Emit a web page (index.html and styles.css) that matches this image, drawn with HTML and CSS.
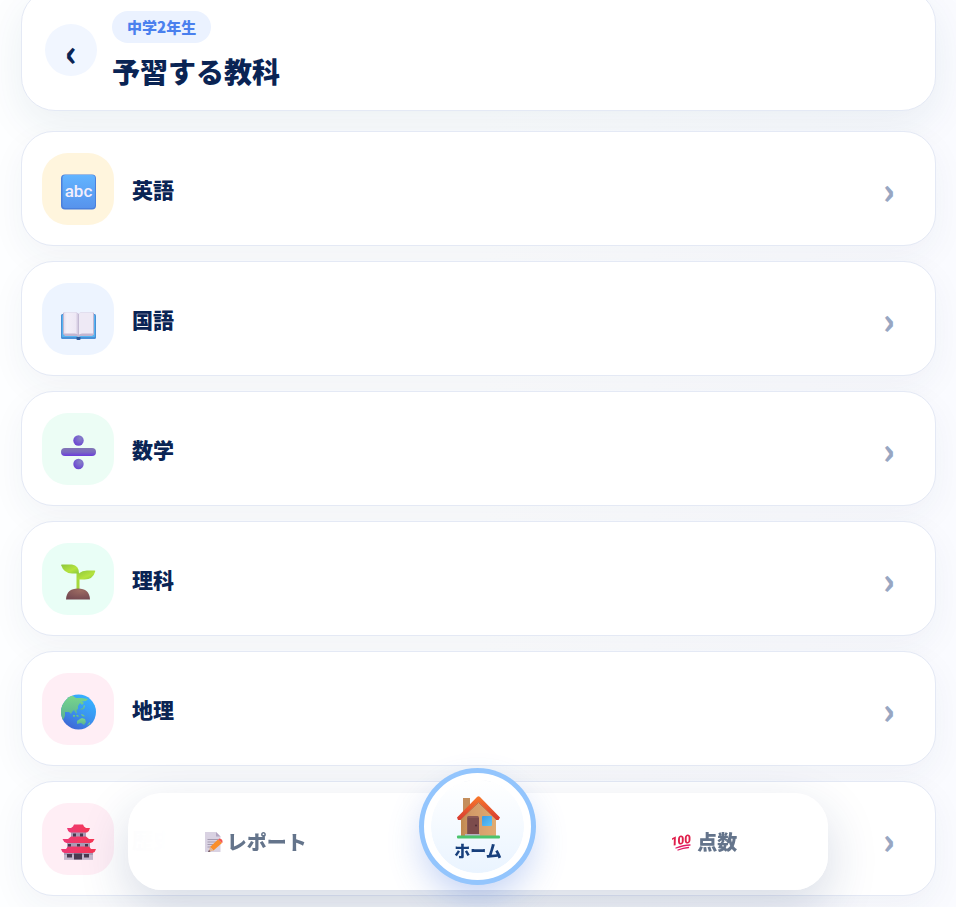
FILE: index.html
```html
<!DOCTYPE html>
<html lang="ja">
<head>
    <meta charset="UTF-8">
    <meta name="viewport" content="width=device-width, initial-scale=1.0">
    <link rel="stylesheet" href="styles.css">
    <title>予習する教科</title>
</head>
<body>
    <main class="page">
        <header class="page-header">
            <button type="button" class="back-button" aria-label="戻る">‹</button>
            <div class="header-text">
                <span class="grade-pill">中学2年生</span>
                <h1 class="page-title">予習する教科</h1>
            </div>
        </header>

        <nav class="subject-list" aria-label="教科">
            <a href="#english" class="subject-card">
                <span class="subject-icon english">
                    <svg viewBox="0 0 36 36" width="36" height="36" aria-hidden="true">
                        <defs>
                            <linearGradient id="abcBg" x1="0" y1="0" x2="0" y2="1">
                                <stop offset="0" stop-color="#62b4ff"/>
                                <stop offset="1" stop-color="#5793ec"/>
                            </linearGradient>
                        </defs>
                        <rect x="1" y="0.5" width="35" height="35" rx="4" fill="#4a80dc"/>
                        <rect x="2.500" y="1" width="32.500" height="33" rx="3" fill="url(#abcBg)"/>
                        <text x="18.5" y="23" text-anchor="middle" class="abc-text">abc</text>
                    </svg>
                </span>
                <span class="subject-name">英語</span>
                <span class="chevron" aria-hidden="true">›</span>
            </a>

            <a href="#japanese" class="subject-card">
                <span class="subject-icon japanese">
                    <svg viewBox="0 0 36 36" width="36" height="36" aria-hidden="true">
                        <defs>
                            <linearGradient id="pageL" x1="0" y1="0" x2="1" y2="0">
                                <stop offset="0" stop-color="#e6e0ee"/>
                                <stop offset="0.2" stop-color="#f3eff8"/>
                                <stop offset="0.8" stop-color="#eee8f5"/>
                                <stop offset="1" stop-color="#c9bfd9"/>
                            </linearGradient>
                        </defs>
                        <rect x="1" y="10" width="35" height="25" rx="1.5" fill="#4a90d6"/>
                        <rect x="2" y="11" width="33" height="22" rx="1" fill="#56b4f0"/>
                        <path d="M16.5 33h4v2.5q-2 1.5-4 0z" fill="#2d5c9e"/>
                        <path d="M3 30V9.500Q3 8.500 4 8.500H16Q18 8.500 18.500 10Q19 8.500 21 8.500H33Q34 8.500 34 9.500V30.500L32 32H20.500L18.500 33L16.500 32H5z" fill="#c2b6d1"/>
                        <path d="M4 30V9.500Q4 8.500 5 8.500H15.500Q18 8.500 18.500 10V31Q17 29.500 15 29.500H4z" fill="url(#pageL)"/>
                        <path d="M33 29.500V9.500Q33 8.500 32 8.500H21.500Q19 8.500 18.500 10V31Q20 29.500 22 29.500z" fill="#eee9f5"/>
                        <path d="M18.500 10V31" stroke="#c4bad3"/>
                    </svg>
                </span>
                <span class="subject-name">国語</span>
                <span class="chevron" aria-hidden="true">›</span>
            </a>

            <a href="#math" class="subject-card">
                <span class="subject-icon math">
                    <svg viewBox="0 0 36 36" width="36" height="36" aria-hidden="true">
                        <defs>
                            <radialGradient id="divDot" cx="0.65" cy="0.3" r="0.8">
                                <stop offset="0" stop-color="#8783c4"/>
                                <stop offset="0.5" stop-color="#7862cf"/>
                                <stop offset="1" stop-color="#673fd0"/>
                            </radialGradient>
                            <linearGradient id="divBar" x1="0" y1="0" x2="0" y2="1">
                                <stop offset="0" stop-color="#8276b5"/>
                                <stop offset="0.5" stop-color="#7a6bbf"/>
                                <stop offset="1" stop-color="#6b3bdd"/>
                            </linearGradient>
                        </defs>
                        <circle cx="18.500" cy="6.500" r="5.200" fill="url(#divDot)"/>
                        <rect x="1" y="14" width="35" height="8" rx="4" fill="url(#divBar)"/>
                        <circle cx="18.500" cy="30" r="5.200" fill="url(#divDot)"/>
                    </svg>
                </span>
                <span class="subject-name">数学</span>
                <span class="chevron" aria-hidden="true">›</span>
            </a>

            <a href="#science" class="subject-card">
                <span class="subject-icon science">
                    <svg viewBox="0 0 36 36" width="36" height="36" aria-hidden="true">
                        <defs>
                            <linearGradient id="leaf" x1="0" y1="0" x2="1" y2="1">
                                <stop offset="0" stop-color="#8cc63c"/>
                                <stop offset="0.6" stop-color="#b5e33e"/>
                                <stop offset="1" stop-color="#87c93e"/>
                            </linearGradient>
                            <radialGradient id="soil" cx="0.6" cy="0.2" r="0.9">
                                <stop offset="0" stop-color="#9c6b62"/>
                                <stop offset="1" stop-color="#724750"/>
                            </radialGradient>
                        </defs>
                        <path d="M16.500 26V9H19V15H19.500V26z" fill="#a5d83c"/>
                        <path d="M1 1Q1 0.500 2 0.500H12Q19 1.500 19 9.500H12Q4 9.500 1 1z" fill="url(#leaf)"/>
                        <path d="M17 15.500Q17 7 27 6.500L34.500 6.500Q35.500 6.500 35.200 7.500Q33 15.500 24.500 15.500z" fill="url(#leaf)"/>
                        <path d="M6 35.500Q6.500 24.500 18 24.500T30 35.500z" fill="url(#soil)"/>
                    </svg>
                </span>
                <span class="subject-name">理科</span>
                <span class="chevron" aria-hidden="true">›</span>
            </a>

            <a href="#geography" class="subject-card">
                <span class="subject-icon geography">
                    <svg viewBox="0 0 36 36" width="36" height="36" aria-hidden="true">
                        <defs>
                            <linearGradient id="sea" x1="0.8" y1="0.1" x2="0.3" y2="1">
                                <stop offset="0" stop-color="#36b0ff"/>
                                <stop offset="0.5" stop-color="#3b93ef"/>
                                <stop offset="1" stop-color="#3f66d4"/>
                            </linearGradient>
                            <linearGradient id="land" x1="0" y1="0" x2="0" y2="1">
                                <stop offset="0" stop-color="#79d68b"/>
                                <stop offset="1" stop-color="#58b093"/>
                            </linearGradient>
                            <clipPath id="globe"><circle cx="18.500" cy="18" r="17.500"/></clipPath>
                        </defs>
                        <circle cx="18.500" cy="18" r="17.500" fill="url(#sea)"/>
                        <g clip-path="url(#globe)" fill="url(#land)">
                            <path d="M0 26V8L8 1.500L13 2L16 4L22 4L28 5L26 7L22 7.500L24 9L22 11L20 9L18 12L18 15L16.500 16L17 20L15 18L14 16L12 18L11 20L9 18L5 18L5 22L3 26z"/>
                            <path d="M20 15l3-1 1-3 1 1-1 3-3 1z"/>
                            <path d="M13 21h2v2h-2zM16 21h2l1 2h-2zM21 20l3 1 1 2-3-1z"/>
                            <path d="M17 27L20 25L22 24L25 25L26 28L24 31L21 29L17 30z"/>
                            <path d="M28 30l2-2v2l-3 2z"/>
                        </g>
                    </svg>
                </span>
                <span class="subject-name">地理</span>
                <span class="chevron" aria-hidden="true">›</span>
            </a>

            <a href="#history" class="subject-card">
                <span class="subject-icon history">
                    <svg viewBox="0 0 36 36" width="36" height="36" aria-hidden="true">
                        <defs>
                            <linearGradient id="roof" x1="0" y1="0" x2="1" y2="0">
                                <stop offset="0" stop-color="#ed3976"/>
                                <stop offset="1" stop-color="#f53854"/>
                            </linearGradient>
                        </defs>
                        <path d="M11 8h15v5H11zM7 18h23v6H7zM4 27h29v8.500H4z" fill="#aa9ab5"/>
                        <path d="M4 31h29v4.500H4z" fill="#c3b6cb"/>
                        <path d="M14 0.500H23L24 2.500L26 4L30 4Q29.500 7 27 8.500H10Q7.500 7 7 4L11 4L13 2.500z" fill="url(#roof)"/>
                        <path d="M11 12.500H26L29 15L34.500 15Q33.500 18 30.500 19H6.500Q3.500 18 2.500 15L8 15z" fill="url(#roof)"/>
                        <path d="M8 22.500H29L31 25L36 25Q35.500 28 32.500 29H4.500Q1.500 28 1 25L6 25z" fill="url(#roof)"/>
                        <path d="M13 9.500h3v3h-3zM20 9.500h3v3h-3zM8 20h3v2.500H8zM17 20h3v2.500h-3zM25 20h3v2.500h-3zM7 30h5v3.500H7zM24 30h5v3.500h-5zM14 29.500h8v6h-8z" fill="#493a50"/>
                    </svg>
                </span>
                <span class="subject-name">歴史</span>
                <span class="chevron" aria-hidden="true">›</span>
            </a>
        </nav>
    </main>

    <!-- Bottom tab bar -->
    <nav class="tab-bar" aria-label="メニュー">
        <a href="#report" class="tab">
            <svg viewBox="-5 0 24 22" width="24" height="22" aria-hidden="true">
                <path d="M1 1H12L16.500 5.500V21H1z" fill="#d9d2e2"/>
                <path d="M12 1L16.500 5.500H12z" fill="#b3a6c2"/>
                <path d="M3.500 8.500H14M3.500 11H13M3.500 13.500H10M3.500 16H7" stroke="#a59bb0" stroke-width="1"/>
                <path d="M6 16L14 8.500L18 12L9.500 19.500z" fill="#f98e2b"/>
                <path d="M14 8.500L15.500 7.500Q19 8 18.500 11.500L18 12z" fill="#f45750"/>
                <path d="M6 16L9.500 19.500L4.500 21z" fill="#e3b592"/>
                <path d="M5 19L6.500 20.500L4 21z" fill="#5a4256"/>
            </svg>
            <span>レポート</span>
        </a>

        <a href="#home" class="tab-home" aria-current="page">
            <svg viewBox="0 0 44 44" width="44" height="44" aria-hidden="true">
                <defs>
                    <linearGradient id="wall" x1="0" y1="0" x2="1" y2="0">
                        <stop offset="0" stop-color="#bf884f"/>
                        <stop offset="0.3" stop-color="#d39a68"/>
                        <stop offset="1" stop-color="#e0ac72"/>
                    </linearGradient>
                    <linearGradient id="top" x1="0" y1="0" x2="0" y2="1">
                        <stop offset="0" stop-color="#f8792b"/>
                        <stop offset="1" stop-color="#d83a31"/>
                    </linearGradient>
                    <linearGradient id="pane" x1="0" y1="0" x2="1" y2="1">
                        <stop offset="0" stop-color="#3c9be8"/>
                        <stop offset="1" stop-color="#5dc5f7"/>
                    </linearGradient>
                </defs>
                <rect x="7" y="3" width="7" height="18" fill="#c48e5c"/>
                <path d="M5 21L22.500 4L40 21V41H5z" fill="url(#wall)"/>
                <path d="M4 25L22.500 7.500L41 25" fill="none" stroke="#b5714a" stroke-width="1"/>
                <path d="M1 22.500L21 2Q22.500 0.500 24 2L44 22.500L42.500 25L40.500 25L22.500 7L4 25L2 25z" fill="url(#top)"/>
                <rect x="11" y="21" width="12" height="19" rx="1.500" fill="#8b5854"/>
                <rect x="12" y="23" width="11" height="17" fill="#7c4c4c"/>
                <circle cx="20" cy="30.500" r="1" fill="#4f2c34"/>
                <rect x="26" y="21" width="10" height="10" rx="1" fill="url(#pane)"/>
                <path d="M9 39H24V41H9z" fill="#b8b0c1"/>
                <rect x="1" y="40.500" width="43" height="3" rx="1" fill="#4bc46c"/>
            </svg>
            <span>ホーム</span>
        </a>

        <a href="#score" class="tab">
            <svg viewBox="-4 0 24 22" width="24" height="22" class="hundred" aria-hidden="true">
                <text x="-2" y="13" transform="rotate(-8 10 11)" class="hundred-text">100</text>
                <path d="M3 17Q11 14 17 14M5 19Q10 17 15.500 16.500" fill="none" stroke="#e01965" stroke-width="1.300" stroke-linecap="round"/>
            </svg>
            <span>点数</span>
        </a>
    </nav>
</body>
</html>
```
FILE: styles.css
```css
* {
    box-sizing: border-box;
}

body {
    margin: 0;
    min-height: 100vh;
    font-family: "Noto Sans CJK JP", sans-serif;
    font-weight: 900;
    color: #0a2454;
    background: linear-gradient(90deg, #fdfeff 0%, #fdfeff 50%, #fafbff 100%);
}

a {
    color: inherit;
    text-decoration: none;
}

/* display: flow-root keeps the pulled-up header inside the page */
.page {
    display: flow-root;
    padding: 0 20px 0 21px;
}

.page-header {
    display: flex;
    align-items: center;
    gap: 15px;
    height: 122px;
    margin-top: -11px;
    margin-bottom: 20px;
    padding: 0 23px;
    border: 1px solid #e4e9f5;
    border-radius: 34px;
    background: #fff;
    box-shadow: 0 14px 40px rgba(30, 76, 100, 0.08);
}

.back-button {
    width: 52px;
    height: 52px;
    padding: 0;
    border: 0;
    border-radius: 50%;
    background: #f1f6ff;
    color: #0a2454;
    font: inherit;
    font-size: 36px;
    line-height: 52px;
}

.header-text {
    display: flex;
    flex-direction: column;
    align-items: flex-start;
    gap: 10px;
}

.grade-pill {
    padding: 0 15px;
    border-radius: 16px;
    background: #ebf2ff;
    color: #4a80ee;
    font-size: 15px;
    line-height: 32px;
}

.page-title {
    margin: 0;
    font-size: 28px;
    font-weight: 900;
    line-height: 36px;
}

/* Subject cards */
.subject-list {
    display: flex;
    flex-direction: column;
    gap: 15px;
}

.subject-card {
    display: flex;
    align-items: center;
    gap: 18px;
    padding: 21px 40px 20px 20px;
    border: 1px solid #e4e9f5;
    border-radius: 32px;
    background: #fff;
    box-shadow: 0 12px 34px rgba(30, 62, 100, 0.05);
}

.subject-icon {
    display: flex;
    align-items: center;
    justify-content: center;
    width: 72px;
    height: 72px;
    padding-top: 5px;
    border-radius: 26px;
}

.english {
    background: #fff5dd;
}

.japanese {
    background: #edf4ff;
}

.math {
    background: #ecfdf5;
}

.science {
    background: #e9fef6;
}

.geography,
.history {
    background: #ffeef5;
}

.abc-text {
    font-family: Roboto, sans-serif;
    font-size: 17px;
    font-weight: 500;
    fill: #f3eefb;
}

.subject-name {
    flex: 1;
    font-size: 21px;
    line-height: 30px;
}

.chevron {
    padding-bottom: 2px;
    color: #98a6c2;
    font-size: 36px;
    line-height: 40px;
}

/* Bottom tab bar */
.tab-bar {
    position: fixed;
    right: 0;
    bottom: 17px;
    left: 0;
    display: grid;
    grid-template-columns: 1fr 1fr 1fr;
    align-items: center;
    justify-items: center;
    max-width: 700px;
    height: 97px;
    margin: 0 auto;
    padding: 0 12px;
    border-radius: 34px;
    background: rgba(255, 255, 255, 0.98);
    backdrop-filter: blur(20px);
    box-shadow: 0 18px 50px rgba(30, 58, 110, 0.18);
}

.tab {
    display: flex;
    align-items: center;
    gap: 4px;
    color: #64748b;
    font-size: 20px;
    line-height: 28px;
}

.hundred {
    overflow: visible;
}

.hundred-text {
    font-family: Roboto, sans-serif;
    font-size: 12px;
    font-style: italic;
    font-weight: 900;
    fill: #e01f4b;
}

.tab-home {
    display: flex;
    flex-direction: column;
    align-items: center;
    justify-content: center;
    width: 107px;
    height: 107px;
    margin-top: -30px;
    padding-top: 2px;
    border: 7px solid #fff;
    border-radius: 50%;
    background: #fff linear-gradient(180deg, #fff, #eaf4ff) padding-box;
    box-shadow: 0 0 0 5px #93c5fd, 0 16px 36px rgba(59, 110, 220, 0.32);
    color: #173f7c;
    font-size: 16px;
    line-height: 22px;
}
```
